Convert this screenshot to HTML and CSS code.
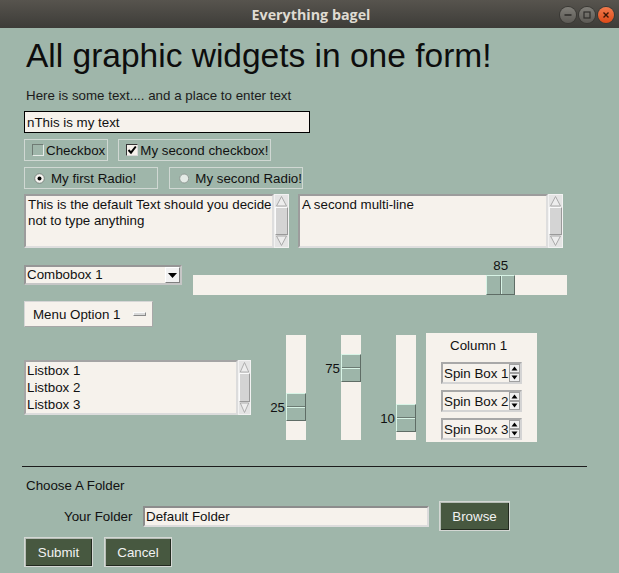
FILE: index.html
```html
<!DOCTYPE html>
<html>
<head>
    <title>Everything bagel</title>
    <link rel="stylesheet" href="styles.css">
</head>
<body>
    <div class="titlebar">
        <span></span>
        <span class="title">Everything bagel</span>
        <div class="win-buttons">
            <span class="win-btn"><svg width="16" height="16" viewBox="0 0 16 16"><path d="M4.5 8h7" stroke="#2f2e2b" stroke-width="1.6"/></svg></span>
            <span class="win-btn"><svg width="16" height="16" viewBox="0 0 16 16"><rect x="5" y="5" width="6" height="6" fill="none" stroke="#2f2e2b" stroke-width="1.2"/></svg></span>
            <span class="win-btn close"><svg width="16" height="16" viewBox="0 0 16 16"><path d="M5.5 5.5l5 5M10.5 5.5l-5 5" stroke="#3a1606" stroke-width="1.4"/></svg></span>
        </div>
    </div>

    <form class="window">
        <h1>All graphic widgets in one form!</h1>
        <div class="intro">Here is some text.... and a place to enter text</div>
        <input class="entry" type="text" value="nThis is my text">

        <div class="row checks">
            <label class="frame"><span class="check"></span>Checkbox</label>
            <label class="frame"><span class="check on"><svg width="10" height="10" viewBox="0 0 10 10"><path d="M1.5 5l2.5 2.7L8.8 1.5" fill="none" stroke="#000" stroke-width="2"/></svg></span>My second checkbox!</label>
        </div>

        <div class="row radios">
            <label class="frame"><svg class="radio" width="11" height="11" viewBox="0 0 11 11"><circle cx="5.5" cy="5.5" r="4.8" fill="#f6f4f0" stroke="#7b8680"/><circle cx="5.5" cy="5.5" r="2" fill="#000"/></svg>My first Radio!</label>
            <label class="frame"><svg class="radio" width="11" height="11" viewBox="0 0 11 11"><circle cx="5.5" cy="5.5" r="4.8" fill="#e4ebe6" stroke="#8d9892"/></svg>My second Radio!</label>
        </div>

        <div class="row multis">
            <div class="textbox">This is the default Text should you decide<br>not to type anything</div>
            <div class="vscroll">
                <span class="sb-arrow"><svg viewBox="0 0 13 12" preserveAspectRatio="none"><path d="M1.5 11 6.5 1.5 11.5 11Z"/></svg></span>
                <span class="sb-thumb"></span>
                <span class="sb-arrow"><svg viewBox="0 0 13 12" preserveAspectRatio="none"><path d="M1.5 1 6.5 10.5 11.5 1Z"/></svg></span>
            </div>
            <div class="textbox second">A second multi-line</div>
            <div class="vscroll">
                <span class="sb-arrow"><svg viewBox="0 0 13 12" preserveAspectRatio="none"><path d="M1.5 11 6.5 1.5 11.5 11Z"/></svg></span>
                <span class="sb-thumb"></span>
                <span class="sb-arrow"><svg viewBox="0 0 13 12" preserveAspectRatio="none"><path d="M1.5 1 6.5 10.5 11.5 1Z"/></svg></span>
            </div>
        </div>

        <div class="row combo-row">
            <div class="combo">
                <span>Combobox 1</span>
                <span class="combo-btn"><svg width="9" height="5" viewBox="0 0 9 5"><path d="M0 0h9L4.5 5z" fill="#000"/></svg></span>
            </div>
            <div class="hslider">
                <div class="thumb" style="left: calc((100% - 29px) * 0.85)"><span class="value">85</span></div>
            </div>
        </div>

        <div class="row">
            <div class="menu-btn">Menu Option 1<span class="menu-mark"></span></div>
        </div>

        <div class="row widgets">
            <div class="listbox">
                <div>Listbox 1</div>
                <div>Listbox 2</div>
                <div>Listbox 3</div>
            </div>
            <div class="vscroll narrow">
                <span class="sb-arrow"><svg viewBox="0 0 13 12" preserveAspectRatio="none"><path d="M1.5 11 6.5 1.5 11.5 11Z"/></svg></span>
                <span class="sb-thumb"></span>
                <span class="sb-arrow"><svg viewBox="0 0 13 12" preserveAspectRatio="none"><path d="M1.5 1 6.5 10.5 11.5 1Z"/></svg></span>
            </div>

            <div class="vslider">
                <div class="thumb" style="top: calc((100% - 28px) * 0.75)"><span class="value">25</span></div>
            </div>
            <div class="vslider">
                <div class="thumb" style="top: calc((100% - 28px) * 0.25)"><span class="value">75</span></div>
            </div>
            <div class="vslider">
                <div class="thumb" style="top: calc((100% - 28px) * 0.9)"><span class="value">10</span></div>
            </div>

            <div class="column">
                <div class="column-title">Column 1</div>
                <div class="spin"><span>Spin Box 1</span><svg width="11" height="18" viewBox="0 0 11 18"><rect x="0.5" y="0.5" width="10" height="8" fill="#f0f0f0" stroke="#a0a0a0"/><rect x="0.5" y="9.5" width="10" height="8" fill="#f0f0f0" stroke="#a0a0a0"/><path d="M2.5 6.5h6l-3-4z"/><path d="M2.5 11.5h6l-3 4z"/></svg></div>
                <div class="spin"><span>Spin Box 2</span><svg width="11" height="18" viewBox="0 0 11 18"><rect x="0.5" y="0.5" width="10" height="8" fill="#f0f0f0" stroke="#a0a0a0"/><rect x="0.5" y="9.5" width="10" height="8" fill="#f0f0f0" stroke="#a0a0a0"/><path d="M2.5 6.5h6l-3-4z"/><path d="M2.5 11.5h6l-3 4z"/></svg></div>
                <div class="spin"><span>Spin Box 3</span><svg width="11" height="18" viewBox="0 0 11 18"><rect x="0.5" y="0.5" width="10" height="8" fill="#f0f0f0" stroke="#a0a0a0"/><rect x="0.5" y="9.5" width="10" height="8" fill="#f0f0f0" stroke="#a0a0a0"/><path d="M2.5 6.5h6l-3-4z"/><path d="M2.5 11.5h6l-3 4z"/></svg></div>
            </div>
        </div>

        <hr class="separator">

        <div class="section-label">Choose A Folder</div>
        <div class="row folder-row">
            <span class="folder-label">Your Folder</span>
            <input class="folder-entry" type="text" value="Default Folder">
            <button type="button" class="btn browse">Browse</button>
        </div>

        <div class="row actions">
            <button type="button" class="btn submit">Submit</button>
            <button type="button" class="btn cancel">Cancel</button>
        </div>
    </form>
</body>
</html>
```

FILE: styles.css
```css
html {
    background-color: #9fb6aa;
}
body {
    margin: 0;
    width: 619px;
    height: 573px;
    overflow: hidden;
    background-color: #9fb6aa;
    font-family: "Liberation Sans", Arial, sans-serif;
    font-size: 13.33px;
    color: #111;
}

/* window decoration */
.titlebar {
    height: 28px;
    display: grid;
    grid-template-columns: 1fr auto 1fr;
    align-items: center;
    background: linear-gradient(#57544e, #3d3c38);
}
.title {
    font-family: "Open Sans", "DejaVu Sans", sans-serif;
    font-weight: bold;
    font-size: 14.3px;
    color: #dfdbd2;
    padding-left: 3px;
}
.win-buttons {
    justify-self: end;
    display: flex;
    gap: 3px;
    margin-right: 5px;
    margin-top: 1px;
}
.win-btn {
    width: 16px;
    height: 16px;
    border-radius: 50%;
    background: linear-gradient(#807e78, #5c5a55);
    box-shadow: 0 0 0 1px #3a3935;
}
.win-btn svg {
    display: block;
}
.win-btn.close {
    background: linear-gradient(#f27a4c, #de4a18);
}

/* form body */
.window {
    padding-left: 24px;
}
h1 {
    font-size: 33.5px;
    font-weight: normal;
    line-height: 38px;
    margin: 9px 0 0 2px;
    color: #0d0d0d;
}
.intro {
    margin: 13px 0 0 2px;
    line-height: 16px;
    color: #1b1b1b;
}
.entry {
    display: block;
    margin: 7px 0 0;
    width: 286px;
    height: 22px;
    box-sizing: border-box;
    border: 1px solid #000;
    background: #f6f2ec;
    padding: 0 2px;
    font: inherit;
    color: #111;
    outline: none;
}
.row {
    display: flex;
}

.frame {
    height: 22px;
    box-sizing: border-box;
    border: 1px solid #d0d8d3;
    display: flex;
    align-items: center;
    padding: 0 2px 0 7px;
    gap: 2px;
    white-space: nowrap;
}
.checks {
    margin-top: 6px;
    gap: 10px;
}
.check {
    width: 12px;
    height: 12px;
    box-sizing: border-box;
    border: 1px solid;
    border-color: #6f7b74 #e6ece8 #e6ece8 #6f7b74;
    display: flex;
    align-items: center;
    justify-content: center;
}
.check.on {
    background: #f6f2ec;
    border-color: #333 #d8d8d8 #d8d8d8 #333;
}
.radios {
    margin-top: 6px;
    gap: 11px;
}
.radios .frame {
    width: 134px;
    padding: 0 0 0 9px;
    gap: 6px;
}

/* multi-line boxes */
.multis {
    margin-top: 5px;
    height: 54px;
}
.textbox {
    width: 250px;
    height: 54px;
    box-sizing: border-box;
    background: #f6f2ec;
    border: 2px solid;
    border-color: #9c9c9c #dedede #dedede #9c9c9c;
    padding: 1px 2px;
    line-height: 16px;
    white-space: nowrap;
    overflow: hidden;
}
.textbox.second {
    margin-left: 9px;
}
.vscroll {
    width: 15px;
    box-sizing: border-box;
    display: flex;
    flex-direction: column;
    background: #e4e4e4;
    border: 1px solid #f2f2f2;
}
.vscroll.narrow {
    width: 13px;
    height: 55px;
    margin-top: 27px;
}
.sb-arrow {
    height: 12px;
    display: block;
}
.sb-arrow svg {
    display: block;
    width: 100%;
    height: 12px;
    fill: #ededed;
    stroke: #a9a9a9;
}
.sb-thumb {
    flex: 1;
    background: #d4d4d4;
    border: 1px solid;
    border-color: #fbfbfb #9a9a9a #9a9a9a #fbfbfb;
}

/* combobox and horizontal slider */
.combo-row {
    margin-top: 17px;
}
.combo {
    width: 158px;
    height: 20px;
    box-sizing: border-box;
    border: 2px solid;
    border-color: #969696 #c6c6c6 #c6c6c6 #969696;
    background: #f6f2ec;
    display: flex;
    justify-content: space-between;
    padding-left: 1px;
    line-height: 16px;
}
.combo-btn {
    width: 15px;
    box-sizing: border-box;
    background: #f2f2f2;
    border: 1px solid;
    border-color: #fff #808080 #808080 #fff;
    display: flex;
    align-items: center;
    justify-content: center;
}
.hslider {
    position: relative;
    width: 374px;
    height: 20px;
    margin: 10px 0 0 11px;
    background: #f6f2ec;
}
.thumb {
    position: absolute;
    box-sizing: border-box;
    background: #9db5a9;
    border: 1px solid;
    border-color: #d8f4e6 #5f6d66 #5f6d66 #d8f4e6;
}
.hslider .thumb {
    top: 0;
    width: 29px;
    height: 20px;
}
.hslider .thumb::after {
    content: "";
    position: absolute;
    left: 13px;
    top: 0;
    bottom: 0;
    width: 1px;
    background: #6b7a72;
    box-shadow: 1px 0 0 #d8f4e6;
}
.hslider .value {
    position: absolute;
    left: 0;
    right: 0;
    bottom: calc(100% + 2px);
    text-align: center;
    line-height: 16px;
}

/* option menu */
.menu-btn {
    margin-top: 6px;
    width: 129px;
    height: 26px;
    box-sizing: border-box;
    background: #f6f2ec;
    border: 1px solid;
    border-color: #d6d6d6 #a8a8a8 #a8a8a8 #d6d6d6;
    display: flex;
    align-items: center;
    justify-content: space-between;
    padding: 0 6px 0 8px;
}
.menu-mark {
    width: 13px;
    height: 4px;
    box-sizing: border-box;
    background: #d9d9d9;
    border: 1px solid;
    border-color: #fafafa #8a8a8a #8a8a8a #fafafa;
}

/* listbox, vertical sliders, spin column */
.widgets {
    margin-top: 6px;
    align-items: flex-start;
}
.listbox {
    width: 214px;
    height: 55px;
    margin-top: 27px;
    box-sizing: border-box;
    background: #f6f2ec;
    border: 2px solid;
    border-color: #a4a4a4 #dcdcdc #dcdcdc #a4a4a4;
    padding-left: 1px;
    line-height: 17px;
}
.vslider {
    position: relative;
    width: 20px;
    height: 105px;
    margin: 2px 0 0 35px;
    background: #f6f2ec;
}
.vslider .thumb {
    left: 0;
    width: 20px;
    height: 28px;
}
.vslider .thumb::after {
    content: "";
    position: absolute;
    top: 12px;
    left: 0;
    right: 0;
    height: 1px;
    background: #6b7a72;
    box-shadow: 0 1px 0 #d8f4e6;
}
.vslider .value {
    position: absolute;
    right: calc(100% + 2px);
    top: 1px;
    line-height: 26px;
}
.column {
    width: 111px;
    height: 109px;
    margin-left: 10px;
    box-sizing: border-box;
    background: #f6f2ec;
    padding: 5px 0 0 15px;
}
.column-title {
    line-height: 16px;
    padding-left: 9px;
    margin-bottom: 8px;
}
.spin {
    width: 81px;
    height: 22px;
    box-sizing: border-box;
    border: 2px solid;
    border-color: #a8a8a8 #d4d4d4 #d4d4d4 #a8a8a8;
    display: flex;
    align-items: center;
    justify-content: space-between;
    padding: 0 0 0 1px;
    margin-bottom: 6px;
}

/* folder chooser */
.separator {
    margin: 24px 0 0 -2px;
    width: 565px;
    height: 1px;
    border: none;
    background: #1c1c1c;
}
.section-label {
    margin: 11px 0 0 2px;
    line-height: 16px;
}
.folder-row {
    margin-top: 7px;
    height: 30px;
    align-items: center;
}
.folder-label {
    margin-left: 40px;
    width: 79px;
}
.folder-entry {
    width: 286px;
    height: 21px;
    box-sizing: border-box;
    margin: 0;
    border: 2px solid;
    border-color: #8c8c8c #dcdcdc #dcdcdc #8c8c8c;
    background: #f6f2ec;
    padding: 0 1px;
    font: inherit;
    color: #111;
    outline: none;
}
.btn {
    height: 30px;
    box-sizing: border-box;
    margin: 0;
    padding: 0;
    background: #475840;
    color: #f2f2f2;
    font: inherit;
    border: 1px solid #d4d8d4;
    box-shadow: inset 1px 1px 0 #b6bdb6, inset -1px -1px 0 #222a1f;
}
.browse {
    width: 71px;
    margin-left: 10px;
}
.actions {
    margin-top: 6px;
    gap: 11px;
}
.submit {
    width: 69px;
}
.cancel {
    width: 68px;
}
```
